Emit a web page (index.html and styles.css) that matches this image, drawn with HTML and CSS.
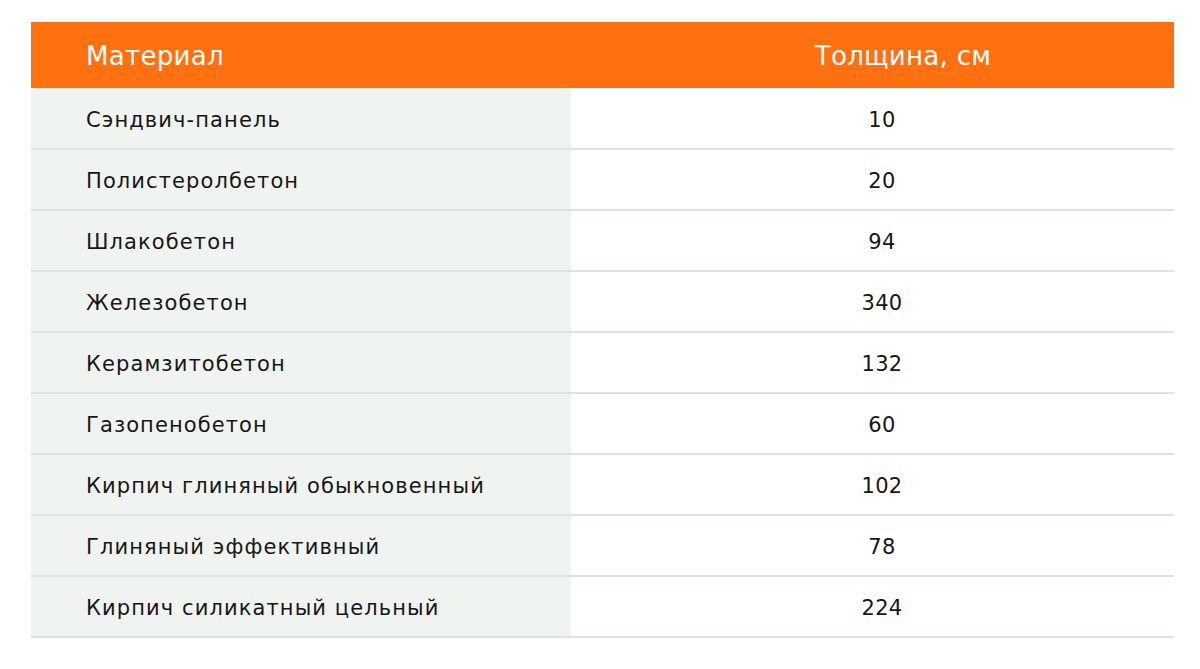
FILE: index.html
```html
<!DOCTYPE html>
<html lang="ru">
<head>
<meta charset="utf-8">
<title>Толщина стен</title>
<link rel="stylesheet" href="styles.css">
</head>
<body>
<table class="tbl">
  <thead>
    <tr class="head">
      <th class="c-mat">Материал</th>
      <th class="c-val">Толщина, см</th>
    </tr>
  </thead>
  <tbody>
    <tr><td class="c-mat">Сэндвич-панель</td><td class="c-val">10</td></tr>
    <tr><td class="c-mat">Полистеролбетон</td><td class="c-val">20</td></tr>
    <tr><td class="c-mat">Шлакобетон</td><td class="c-val">94</td></tr>
    <tr><td class="c-mat">Железобетон</td><td class="c-val">340</td></tr>
    <tr><td class="c-mat">Керамзитобетон</td><td class="c-val">132</td></tr>
    <tr><td class="c-mat">Газопенобетон</td><td class="c-val">60</td></tr>
    <tr><td class="c-mat">Кирпич глиняный обыкновенный</td><td class="c-val">102</td></tr>
    <tr><td class="c-mat">Глиняный эффективный</td><td class="c-val">78</td></tr>
    <tr><td class="c-mat">Кирпич силикатный цельный</td><td class="c-val">224</td></tr>
  </tbody>
</table>
</body>
</html>
```
FILE: styles.css
```css
html, body {
  margin: 0;
  padding: 0;
  background: #ffffff;
}
body {
  padding: 22px 26px 0 31px;
  font-family: "DejaVu Sans", "Noto Sans", sans-serif;
  color: #161616;
}
.tbl {
  width: 1143px;
  border-collapse: collapse;
  table-layout: fixed;
}
.tbl th,
.tbl td {
  box-sizing: border-box;
}
.head th {
  background: #ff7010;
  color: #ffffff;
  font-weight: 400;
  font-size: 26px;
  letter-spacing: 0.3px;
  height: 66px;
  padding: 2px 0 0;
  vertical-align: middle;
}
.head .c-mat {
  text-align: left;
  padding-left: 55px;
}
.head .c-val {
  text-align: center;
  padding-left: 61px;
}
.c-mat {
  width: 540px;
}
tbody td {
  height: 61px;
  padding: 3px 0 0;
  font-size: 21px;
  letter-spacing: 1.1px;
  border-bottom: 2px solid #dce3e1;
  vertical-align: middle;
}
tbody .c-mat {
  background: #f0f4f1;
  padding-left: 55px;
  text-align: left;
}
tbody .c-val {
  background: #ffffff;
  text-align: center;
  padding-left: 19px;
  letter-spacing: 0.3px;
}
```
